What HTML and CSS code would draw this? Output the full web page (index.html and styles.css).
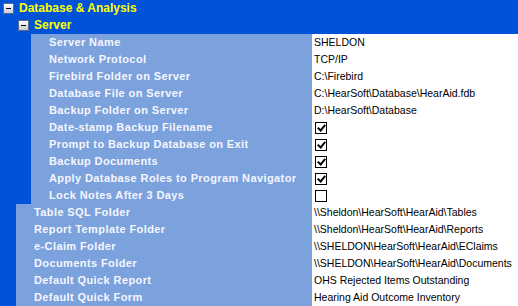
FILE: index.html
```html
<!DOCTYPE html>
<html lang="en">
<head>
  <meta charset="UTF-8" />
  <title>Options</title>
  <link rel="stylesheet" href="styles.css">
</head>
<body>
  <div class="tree">
    <div class="row head">
      <span class="toggle"></span>
      <span class="title">Database &amp; Analysis</span>
    </div>
    <div class="row head sub">
      <span class="toggle"></span>
      <span class="title">Server</span>
    </div>

    <!-- server settings -->
    <div class="row l2"><div class="name">Server Name</div><div class="value">SHELDON</div></div>
    <div class="row l2"><div class="name">Network Protocol</div><div class="value">TCP/IP</div></div>
    <div class="row l2"><div class="name">Firebird Folder on Server</div><div class="value">C:\Firebird</div></div>
    <div class="row l2"><div class="name">Database File on Server</div><div class="value">C:\HearSoft\Database\HearAid.fdb</div></div>
    <div class="row l2"><div class="name">Backup Folder on Server</div><div class="value">D:\HearSoft\Database</div></div>
    <div class="row l2"><div class="name">Date-stamp Backup Filename</div><div class="value"><span class="check on"></span></div></div>
    <div class="row l2"><div class="name">Prompt to Backup Database on Exit</div><div class="value"><span class="check on"></span></div></div>
    <div class="row l2"><div class="name">Backup Documents</div><div class="value"><span class="check on"></span></div></div>
    <div class="row l2"><div class="name">Apply Database Roles to Program Navigator</div><div class="value"><span class="check on"></span></div></div>
    <div class="row l2"><div class="name">Lock Notes After 3 Days</div><div class="value"><span class="check"></span></div></div>

    <!-- database settings -->
    <div class="row l1"><div class="name">Table SQL Folder</div><div class="value">\\Sheldon\HearSoft\HearAid\Tables</div></div>
    <div class="row l1"><div class="name">Report Template Folder</div><div class="value">\\Sheldon\HearSoft\HearAid\Reports</div></div>
    <div class="row l1"><div class="name">e-Claim Folder</div><div class="value">\\SHELDON\HearSoft\HearAid\EClaims</div></div>
    <div class="row l1"><div class="name">Documents Folder</div><div class="value">\\SHELDON\HearSoft\HearAid\Documents</div></div>
    <div class="row l1"><div class="name">Default Quick Report</div><div class="value">OHS Rejected Items Outstanding</div></div>
    <div class="row l1"><div class="name">Default Quick Form</div><div class="value">Hearing Aid Outcome Inventory</div></div>
  </div>
</body>
</html>
```

FILE: styles.css
```css
* {
  box-sizing: border-box;
}

html, body {
  margin: 0;
  padding: 0;
  width: 518px;
  height: 306px;
  overflow: hidden;
  background: #0052d9;
  font-family: 'Liberation Sans', Arial, sans-serif;
  font-size: 11px;
}

.tree {
  display: flex;
  flex-direction: column;
}

.row {
  display: flex;
  height: 17px;
  line-height: 17px;
  white-space: nowrap;
}

.head {
  align-items: center;
  padding-left: 3px;
}

.head.sub {
  padding-left: 18px;
}

.toggle {
  position: relative;
  width: 11px;
  height: 11px;
  margin-right: 5px;
  border: 1px solid #5a6a8a;
  background: linear-gradient(to bottom, #ffffff, #c8ccd6);
}

.toggle::after {
  content: '';
  position: absolute;
  left: 2px;
  top: 4px;
  width: 5px;
  height: 1px;
  background: #000;
}

.title {
  color: #ffff00;
  font-weight: bold;
  font-size: 12px;
}

.l1 {
  padding-left: 16px;
}

.l2 {
  padding-left: 31px;
}

.name {
  flex: 1;
  background: #7ba2dc;
  color: #f6f6ff;
  font-weight: bold;
  letter-spacing: 0.4px;
  padding-left: 18px;
}

.value {
  width: 206px;
  background: #fff;
  color: #000;
  font-size: 10.5px;
  padding-left: 2px;
  display: flex;
  align-items: center;
}

.check {
  position: relative;
  width: 12px;
  height: 12px;
  margin-left: 1px;
  border: 1px solid #000;
  background: #fff;
}

.check.on::after {
  content: '';
  position: absolute;
  left: 3px;
  top: 0px;
  width: 3px;
  height: 6px;
  border: solid #000;
  border-width: 0 2px 2px 0;
  transform: rotate(40deg);
}
```
